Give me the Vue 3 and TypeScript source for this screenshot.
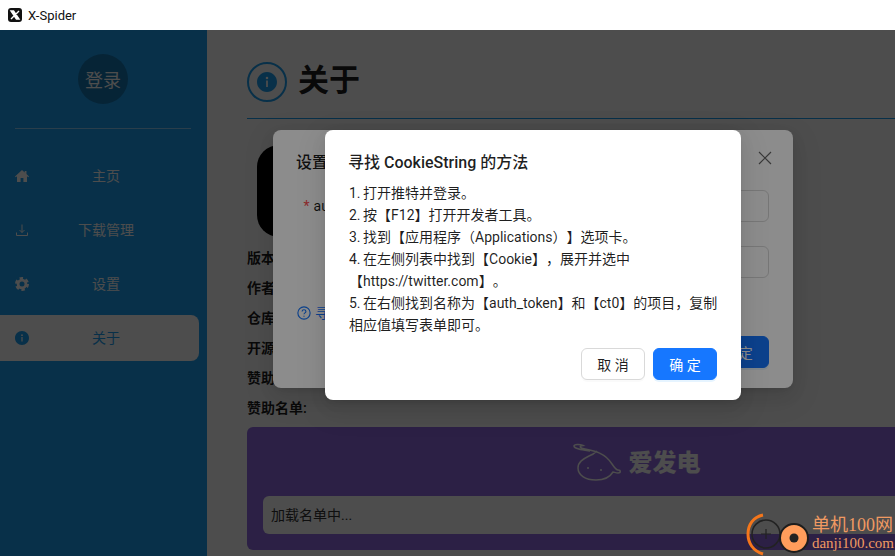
<script setup lang="ts">
const navItems = [
  { key: 'home', label: '主页' },
  { key: 'download', label: '下载管理' },
  { key: 'settings', label: '设置' },
  { key: 'about', label: '关于' },
]

const infoRows = ['版本:', '作者:', '仓库:', '开源协议:', '赞助:', '赞助名单:']

const steps = [
  '1. 打开推特并登录。',
  '2. 按【F12】打开开发者工具。',
  '3. 找到【应用程序（Applications）】选项卡。',
  '4. 在左侧列表中找到【Cookie】，展开并选中【https://twitter.com】。',
  '5. 在右侧找到名称为【auth_token】和【ct0】的项目，复制相应值填写表单即可。',
]

const cookieFields = ['auth_token', 'ct0']
const infoPath =
  'M512 64C264.6 64 64 264.6 64 512s200.6 448 448 448 448-200.6 448-448S759.4 64 512 64zm40 664c0 6-4 10-10 10h-60c-6 0-10-4-10-10V456c0-6 4-10 10-10h60c6 0 10 4 10 10v272zm-40-340a58 58 0 010-116 58 58 0 010 116z'
</script>

<template>
  <div class="window">
    <header class="titlebar">
      <svg class="app-logo" viewBox="0 0 14 14">
        <rect width="14" height="14" rx="3" fill="#111" />
        <path d="M3 3h2.600L11 11H8.400zM11 3 3 11" fill="#fff" stroke="#fff" stroke-width="1.400" />
      </svg>
      <span>X-Spider</span>
    </header>

    <div class="body">
      <aside class="sidebar">
        <div class="avatar">登录</div>
        <div class="divider"></div>
        <nav class="nav">
          <div v-for="item in navItems" :key="item.key" class="nav-item" :class="{ active: item.key === 'about' }">
            <svg v-if="item.key === 'home'" class="nav-icon" viewBox="0 0 14 14">
              <path d="M7 1 0 7.400l.8.9L2 7.300V13h3.600V9h2.800v4H12V7.300l1.200 1 .8-.9L11.500 5.100V2h-1.800v1.400z" fill="currentColor" />
            </svg>
            <svg v-else-if="item.key === 'download'" class="nav-icon" viewBox="0 0 14 14" fill="none" stroke="currentColor">
              <path d="M7 1.500v8M4.500 7 7 9.500 9.500 7M1.500 9.500v3h11v-3" />
            </svg>
            <svg v-else-if="item.key === 'settings'" class="nav-icon" viewBox="0 0 14 14" fill="none" stroke="currentColor">
              <circle cx="7" cy="7" r="3.900" stroke-width="2.800" />
              <circle cx="7" cy="7" r="5.800" stroke-width="2.400" stroke-dasharray="3.400 2.670" />
            </svg>
            <svg v-else class="nav-icon" viewBox="64 64 896 896">
              <path :d="infoPath" fill="currentColor" />
            </svg>
            <span class="nav-label">{{ item.label }}</span>
          </div>
        </nav>
      </aside>

      <main class="content">
        <div class="page-head">
          <span class="head-icon">
            <svg viewBox="64 64 896 896"><path :d="infoPath" fill="currentColor" /></svg>
          </span>
          <h1>关于</h1>
        </div>
        <div class="logo-tile">
          <svg viewBox="0 0 92 92" width="92" height="92">
            <path d="M22 20h16l32 52H54zM68 20 24 72" fill="#fff" stroke="#fff" stroke-width="5" />
          </svg>
        </div>
        <div v-for="row in infoRows" :key="row" class="info-row">{{ row }}</div>
        <section class="sponsor">
          <div class="sponsor-brand">
            <svg width="50" height="40" viewBox="0 0 50 40" fill="none" stroke="currentColor" stroke-width="1.500">
              <path d="M17 8C10 7 1 6 1 3c0-2 6-2 9-.5C6 3 6 5 12 6c10 2 20 4 27 15 2 3 4 6 6 6 3 0 3 3 0 3-2 0-4-1-5-1-3 5-9 8-17 8-11 0-18-5-18-12 0-6 5-9 11-12 3-1 6-3 8-5" />
              <circle cx="15" cy="25" r="1" fill="currentColor" stroke="none" />
              <circle cx="28" cy="27" r="1" fill="currentColor" stroke="none" />
            </svg>
            <span>爱发电</span>
          </div>
          <div class="sponsor-list">加载名单中...</div>
        </section>
      </main>

      <div class="mask">
        <div class="modal modal-settings">
          <div class="modal-title">设置 CookieString</div>
          <svg class="modal-close" viewBox="0 0 14 14" fill="none" stroke="currentColor" stroke-width="1.200">
            <path d="M1 1l12 12M13 1 1 13" />
          </svg>
          <div class="form">
            <div v-for="field in cookieFields" :key="field" class="form-row">
              <label><i>*</i>{{ field }}</label>
              <div class="input"></div>
            </div>
          </div>
          <div class="help-link">
            <svg viewBox="0 0 16 16" width="14" height="14" fill="none" stroke="currentColor" stroke-width="1.300">
              <circle cx="8" cy="8" r="7" />
              <path d="M5.800 6.300C5.800 5 6.800 4.300 8 4.300s2.200.8 2.200 1.900c0 1.600-2.200 1.700-2.200 3.300" />
              <circle cx="8" cy="11.600" r=".7" fill="currentColor" stroke="none" />
            </svg>
            <span>寻找 CookieString 的方法</span>
          </div>
          <div class="settings-foot">
            <button class="btn primary">确 定</button>
          </div>
        </div>
      </div>

      <div class="mask">
        <div class="modal modal-confirm">
          <div class="modal-title">寻找 CookieString 的方法</div>
          <div class="steps">
            <div v-for="step in steps" :key="step">{{ step }}</div>
          </div>
          <div class="confirm-foot">
            <button class="btn">取 消</button>
            <button class="btn primary">确 定</button>
          </div>
        </div>
      </div>
    </div>

    <div class="watermark">
      <svg width="66" height="43" viewBox="0 0 66 43" fill="none">
        <path d="M17 2C7 4 2 12 2 21s5 17 15 20" stroke="#f4761b" stroke-width="3" />
        <circle cx="20" cy="21" r="14" stroke="#222" stroke-width="1.500" />
        <path d="M20 16v10M15 21h10" stroke="#222" stroke-width="1.200" />
        <circle cx="48" cy="25" r="14" fill="#ff9d5c" stroke="#1d1d1d" stroke-width="2" />
        <circle cx="48" cy="25" r="4.500" fill="#222" />
      </svg>
      <div class="watermark-text">
        <b>单机100网</b>
        <span>danji100.com</span>
      </div>
    </div>
  </div>
</template>

<style scoped>
.window {
  position: relative;
  width: 895px;
  height: 556px;
  overflow: hidden;
  background: #fff;
  color: rgba(0, 0, 0, 0.88);
  font-family: Roboto, 'Noto Sans CJK SC', sans-serif;
  font-size: 14px;
}

.titlebar {
  display: flex;
  align-items: center;
  gap: 6px;
  height: 30px;
  padding-left: 8px;
  font-size: 13px;
  color: #111;
}

.app-logo {
  width: 14px;
  height: 14px;
}

.body {
  position: relative;
  display: flex;
  width: 1066px;
  height: 526px;
}

.sidebar {
  flex: none;
  width: 207px;
  padding-top: 24px;
  box-sizing: border-box;
  background: #1da1f2;
  color: #fff;
}

.avatar {
  display: flex;
  align-items: center;
  justify-content: center;
  width: 50px;
  height: 50px;
  margin-left: 78px;
  border-radius: 50%;
  background: rgba(0, 0, 0, 0.25);
  font-size: 18px;
}

.divider {
  height: 1px;
  margin: 24px 16px 24px 15px;
  background: rgba(255, 255, 255, 0.5);
}

.nav {
  display: flex;
  flex-direction: column;
  gap: 8px;
  width: 199px;
}

.nav-item {
  display: flex;
  align-items: center;
  height: 46px;
  padding: 0 16px 0 15px;
  border-radius: 0 8px 8px 0;
}

.nav-item.active {
  background: #fff;
  color: #1da1f2;
}

.nav-icon {
  flex: none;
  width: 14px;
  height: 14px;
}

.nav-label {
  flex: 1;
  margin-bottom: 2px;
  text-align: center;
}

.content {
  flex: 1;
  min-width: 0;
  padding: 32px 40px 0;
}

.page-head {
  display: flex;
  align-items: center;
  gap: 11px;
  padding-bottom: 16px;
  border-bottom: 1px solid #1da1f2;
}

.head-icon {
  display: flex;
  align-items: center;
  justify-content: center;
  width: 40px;
  height: 40px;
  box-sizing: border-box;
  border: 2px solid #1da1f2;
  border-radius: 50%;
  color: #1da1f2;
}

.head-icon svg {
  width: 20px;
  height: 20px;
}

.page-head h1 {
  margin: 0;
  font-size: 31px;
  line-height: 38px;
  height: 40px;
  font-weight: 700;
}

.logo-tile {
  width: 92px;
  height: 92px;
  margin: 26px 0 6px 10px;
  border-radius: 22px;
  background: #000;
}

.info-row {
  height: 30px;
  line-height: 30px;
  font-weight: 600;
}

.sponsor {
  margin-top: 4px;
  padding: 16px;
  border-radius: 6px;
  background: #946ce6;
}

.sponsor-brand {
  display: flex;
  align-items: flex-start;
  justify-content: center;
  gap: 6px;
  height: 53px;
  color: #fff;
}

.sponsor-brand span {
  margin-top: 3px;
  font-size: 24px;
  line-height: 34px;
  font-weight: 900;
}

.sponsor-list {
  height: 38px;
  padding-left: 8px;
  border-radius: 6px;
  background: #fff;
  line-height: 38px;
  color: #333;
}

.mask {
  position: absolute;
  inset: 0;
  display: flex;
  align-items: flex-start;
  justify-content: center;
  padding-top: 100px;
  box-sizing: border-box;
  background: rgba(0, 0, 0, 0.45);
}

.modal {
  position: relative;
  padding: 20px 24px;
  box-sizing: border-box;
  border-radius: 8px;
  background: #fff;
  box-shadow: 0 6px 16px rgba(0, 0, 0, 0.08), 0 3px 6px -4px rgba(0, 0, 0, 0.12), 0 9px 28px 8px rgba(0, 0, 0, 0.05);
}

.modal-settings {
  width: 520px;
}

.modal-confirm {
  width: 416px;
}

.modal-title {
  margin: 0 0 -2px -1px;
  font-size: 16px;
  line-height: 26px;
  font-weight: 500;
}

.modal-close {
  position: absolute;
  top: 21px;
  right: 21px;
  width: 14px;
  height: 14px;
  color: rgba(0, 0, 0, 0.6);
}

.form {
  display: flex;
  flex-direction: column;
  gap: 24px;
  margin-top: 16px;
}

.form-row {
  display: flex;
  align-items: center;
}

.form-row label {
  flex: none;
  width: 93px;
  padding-right: 8px;
  box-sizing: border-box;
  text-align: right;
}

.form-row i {
  margin-right: 4px;
  font-style: normal;
  color: #ff4d4f;
}

.input {
  flex: 1;
  height: 32px;
  box-sizing: border-box;
  border: 1px solid #d9d9d9;
  border-radius: 6px;
}

.help-link {
  display: flex;
  align-items: center;
  gap: 4px;
  margin-top: 24px;
  line-height: 22px;
  color: #1677ff;
}

.settings-foot {
  display: flex;
  justify-content: flex-end;
  margin-top: 12px;
}

.settings-foot .btn {
  background: #1da1f2;
  border-color: #1da1f2;
}

.steps {
  margin: 8px -2px 0 0;
  line-height: 22px;
  word-spacing: -1px;
  text-spacing-trim: space-all;
}

.confirm-foot {
  display: flex;
  justify-content: flex-end;
  gap: 8px;
  margin-top: 12px;
}

.btn {
  width: 64px;
  height: 32px;
  padding: 0;
  border: 1px solid #d9d9d9;
  border-radius: 6px;
  background: #fff;
  color: rgba(0, 0, 0, 0.88);
  font: inherit;
  box-shadow: 0 2px 0 rgba(0, 0, 0, 0.02);
}

.btn.primary {
  border-color: #1677ff;
  background: #1677ff;
  color: #fff;
  box-shadow: 0 2px 0 rgba(5, 145, 255, 0.1);
}

.watermark {
  position: absolute;
  right: 1px;
  bottom: 0;
  display: flex;
  align-items: flex-end;
}

.watermark-text {
  display: flex;
  flex-direction: column;
  color: #f09a62;
  padding-bottom: 5px;
}

.watermark-text b {
  font-family: 'Liberation Serif', 'Noto Sans CJK SC', serif;
  font-size: 18px;
  font-weight: 400;
  line-height: 20px;
  white-space: nowrap;
}

.watermark-text span {
  font-family: 'Liberation Serif', serif;
  font-size: 15px;
  line-height: 16px;
}
</style>

<style>
html,
body {
  overflow: hidden;
}
</style>
